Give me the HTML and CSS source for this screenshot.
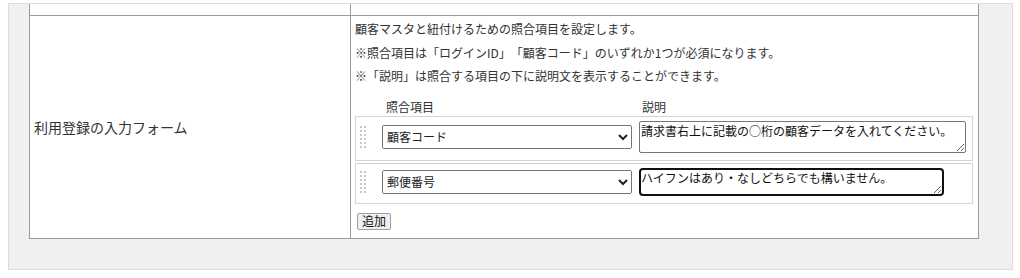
FILE: index.html
```
<!DOCTYPE html>
<html lang="ja">
<head>
    <meta charset="UTF-8">
    <title>利用登録の入力フォーム</title>
    <link rel="stylesheet" href="styles.css">
</head>
<body>
    <div class="panel">
        <table class="form-table">
            <tr class="prev-row">
                <td class="prev-cell prev-label"></td>
                <td class="prev-cell"></td>
            </tr>
            <tr>
                <td class="label-cell">利用登録の入力フォーム</td>
                <td class="value-cell">
                    <p class="note">顧客マスタと紐付けるための照合項目を設定します。</p>
                    <p class="note">※照合項目は「ログインID」「顧客コード」のいずれか1つが必須になります。</p>
                    <p class="note">※「説明」は照合する項目の下に説明文を表示することができます。</p>

                    <div class="match-head">
                        <span class="match-head-key">照合項目</span>
                        <span class="match-head-desc">説明</span>
                    </div>

                    <div class="match-list">
                        <div class="match-row">
                            <svg class="handle" width="6" height="22" viewBox="0 0 6 22">
                                <g fill="#c8c8c8">
                                    <rect x="0" y="0" width="2" height="2"/><rect x="4" y="0" width="2" height="2"/>
                                    <rect x="0" y="4" width="2" height="2"/><rect x="4" y="4" width="2" height="2"/>
                                    <rect x="0" y="8" width="2" height="2"/><rect x="4" y="8" width="2" height="2"/>
                                    <rect x="0" y="12" width="2" height="2"/><rect x="4" y="12" width="2" height="2"/>
                                    <rect x="0" y="16" width="2" height="2"/><rect x="4" y="16" width="2" height="2"/>
                                    <rect x="0" y="20" width="2" height="2"/><rect x="4" y="20" width="2" height="2"/>
                                </g>
                            </svg>
                            <select class="match-key">
                                <option>顧客コード</option>
                                <option>ログインID</option>
                                <option>郵便番号</option>
                            </select>
                            <textarea class="match-desc match-desc-wide">請求書右上に記載の○桁の顧客データを入れてください。</textarea>
                        </div>
                        <div class="match-row">
                            <svg class="handle" width="6" height="22" viewBox="0 0 6 22">
                                <g fill="#c8c8c8">
                                    <rect x="0" y="0" width="2" height="2"/><rect x="4" y="0" width="2" height="2"/>
                                    <rect x="0" y="4" width="2" height="2"/><rect x="4" y="4" width="2" height="2"/>
                                    <rect x="0" y="8" width="2" height="2"/><rect x="4" y="8" width="2" height="2"/>
                                    <rect x="0" y="12" width="2" height="2"/><rect x="4" y="12" width="2" height="2"/>
                                    <rect x="0" y="16" width="2" height="2"/><rect x="4" y="16" width="2" height="2"/>
                                    <rect x="0" y="20" width="2" height="2"/><rect x="4" y="20" width="2" height="2"/>
                                </g>
                            </svg>
                            <select class="match-key">
                                <option>郵便番号</option>
                                <option>顧客コード</option>
                                <option>ログインID</option>
                            </select>
                            <textarea class="match-desc is-active">ハイフンはあり・なしどちらでも構いません。</textarea>
                        </div>
                    </div>

                    <button class="add-button" type="button">追加</button>
                </td>
            </tr>
        </table>
    </div>
</body>
</html>
```

FILE: styles.css
```
body {
    margin: 0;
    padding-top: 3px;
    font-family: "Noto Sans CJK JP", "Noto Sans", sans-serif;
    color: #333;
    background: #fff;
    text-spacing-trim: space-all;
}
.panel {
    margin-left: 8px;
    width: 1005px;
    height: 267px;
    box-sizing: border-box;
    padding: 0 0 0 20px;
    background: #eff0ef;
    border: 1px solid #dcdcdc;
}
.form-table {
    width: 950px;
    border-collapse: collapse;
    background: #fff;
}
.form-table td {
    border: 1px solid #9a9a9a;
    padding: 0;
}
.prev-row .prev-cell {
    border-top: none;
    height: 11px;
    padding: 0;
}
.prev-label {
    width: 320px;
}
.label-cell {
    padding-left: 4px !important;
    font-size: 14px;
    vertical-align: middle;
}
.value-cell {
    padding: 1px 5px 8px 4px !important;
    font-size: 12px;
    vertical-align: top;
}
.note {
    margin: 0;
    line-height: 23.5px;
}
.match-head {
    display: flex;
    margin-top: 10px;
    line-height: 18px;
}
.match-head-key {
    width: 256px;
    margin-left: 31px;
}
.match-list {
    display: flex;
    flex-direction: column;
    gap: 2px;
    width: 618px;
}
.match-row {
    display: flex;
    align-items: center;
    padding: 4px 6px 7px 4px;
    border: 1px solid #d4d4d4;
}
.handle {
    flex: none;
    margin-right: 16px;
}
.match-key {
    width: 250px;
    height: 24px;
    margin: 0 7px 0 0;
    font: inherit;
    font-size: 12px;
    color: #222;
}
.match-desc {
    box-sizing: border-box;
    width: 327px;
    height: 28px;
    margin: 0;
    padding: 1px 1px;
    font: inherit;
    font-size: 12px;
    line-height: 15px;
    color: #111;
    border: 1px solid #767676;
    border-radius: 2px;
}
.match-desc-wide {
    height: 32px;
}
.match-desc.is-active {
    width: 305px;
    border: 2px solid #101010;
    border-radius: 4px;
    padding: 0;
    outline: none;
}
.add-button {
    margin: 9px 0 0 2px;
    padding: 0 4px;
    height: 17px;
    font: inherit;
    font-size: 12px;
    line-height: 14px;
    color: #111;
    background: #efefef;
    border: 1px solid #a0a0a0;
    border-radius: 2px;
}
```
